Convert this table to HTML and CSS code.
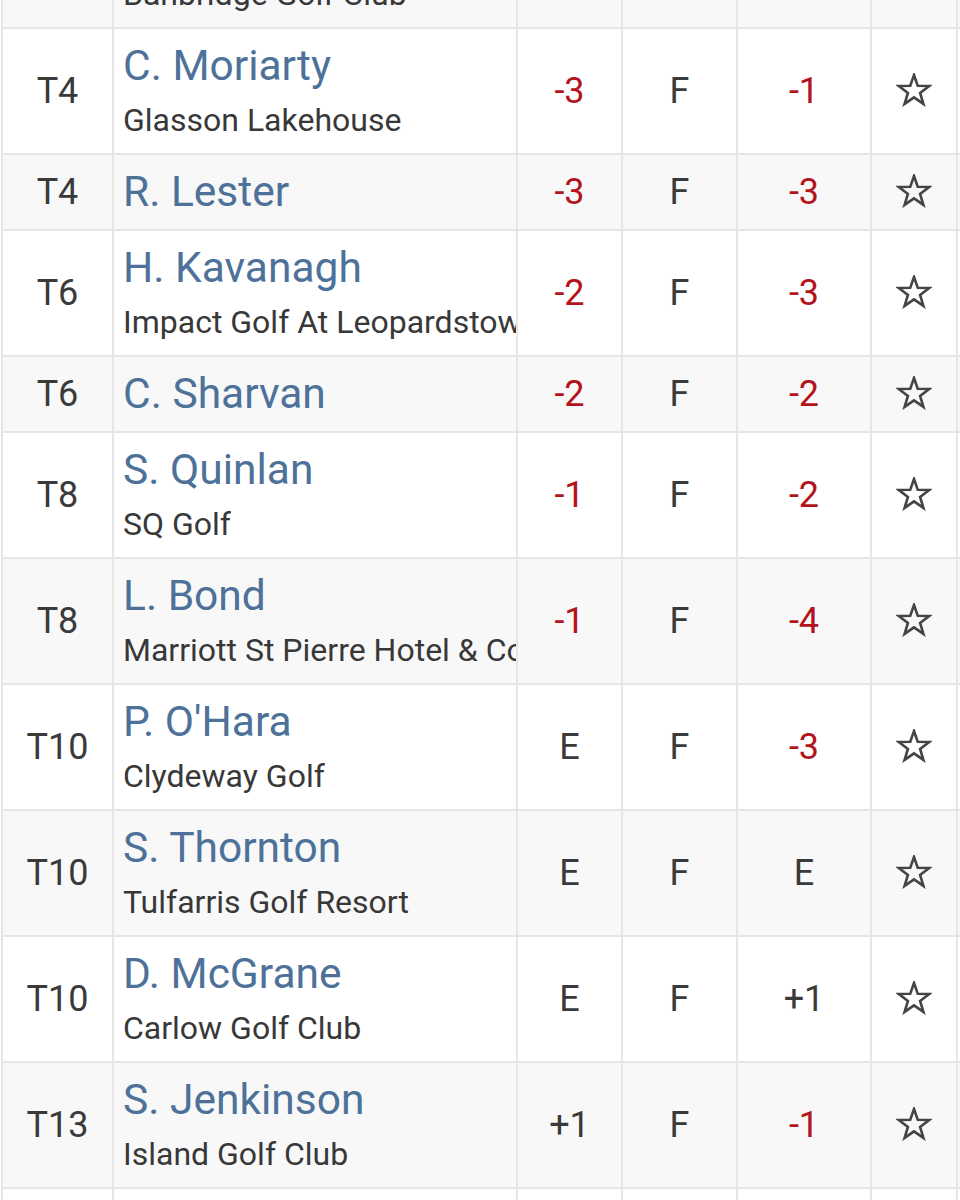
FILE: index.html
```html
<!DOCTYPE html>
<html lang="en">
<head>
<meta charset="utf-8">
<title>Leaderboard</title>
<link rel="stylesheet" href="styles.css">
</head>
<body>
<div class="board" role="table">
  <div class="row" role="row">
    <div class="cell pos">3</div>
    <div class="cell player"><a class="name">P. Doran</a><div class="club">Banbridge Golf Club</div></div>
    <div class="cell num under">-4</div>
    <div class="cell num">F</div>
    <div class="cell num under">-2</div>
    <div class="cell fav"><svg class="star" viewBox="0 0 36 34"><polygon points="18,2 21.76,12.82 33.22,13.06 24.09,19.98 27.4,30.94 18,24.4 8.6,30.94 11.91,19.98 2.78,13.06 14.24,12.82"/></svg></div>
  </div>
  <div class="row" role="row">
    <div class="cell pos">T4</div>
    <div class="cell player"><a class="name">C. Moriarty</a><div class="club">Glasson Lakehouse</div></div>
    <div class="cell num under">-3</div>
    <div class="cell num">F</div>
    <div class="cell num under">-1</div>
    <div class="cell fav"><svg class="star" viewBox="0 0 36 34"><polygon points="18,2 21.76,12.82 33.22,13.06 24.09,19.98 27.4,30.94 18,24.4 8.6,30.94 11.91,19.98 2.78,13.06 14.24,12.82"/></svg></div>
  </div>
  <div class="row" role="row">
    <div class="cell pos">T4</div>
    <div class="cell player"><a class="name">R. Lester</a></div>
    <div class="cell num under">-3</div>
    <div class="cell num">F</div>
    <div class="cell num under">-3</div>
    <div class="cell fav"><svg class="star" viewBox="0 0 36 34"><polygon points="18,2 21.76,12.82 33.22,13.06 24.09,19.98 27.4,30.94 18,24.4 8.6,30.94 11.91,19.98 2.78,13.06 14.24,12.82"/></svg></div>
  </div>
  <div class="row" role="row">
    <div class="cell pos">T6</div>
    <div class="cell player"><a class="name">H. Kavanagh</a><div class="club">Impact Golf At Leopardstown</div></div>
    <div class="cell num under">-2</div>
    <div class="cell num">F</div>
    <div class="cell num under">-3</div>
    <div class="cell fav"><svg class="star" viewBox="0 0 36 34"><polygon points="18,2 21.76,12.82 33.22,13.06 24.09,19.98 27.4,30.94 18,24.4 8.6,30.94 11.91,19.98 2.78,13.06 14.24,12.82"/></svg></div>
  </div>
  <div class="row" role="row">
    <div class="cell pos">T6</div>
    <div class="cell player"><a class="name">C. Sharvan</a></div>
    <div class="cell num under">-2</div>
    <div class="cell num">F</div>
    <div class="cell num under">-2</div>
    <div class="cell fav"><svg class="star" viewBox="0 0 36 34"><polygon points="18,2 21.76,12.82 33.22,13.06 24.09,19.98 27.4,30.94 18,24.4 8.6,30.94 11.91,19.98 2.78,13.06 14.24,12.82"/></svg></div>
  </div>
  <div class="row" role="row">
    <div class="cell pos">T8</div>
    <div class="cell player"><a class="name">S. Quinlan</a><div class="club">SQ Golf</div></div>
    <div class="cell num under">-1</div>
    <div class="cell num">F</div>
    <div class="cell num under">-2</div>
    <div class="cell fav"><svg class="star" viewBox="0 0 36 34"><polygon points="18,2 21.76,12.82 33.22,13.06 24.09,19.98 27.4,30.94 18,24.4 8.6,30.94 11.91,19.98 2.78,13.06 14.24,12.82"/></svg></div>
  </div>
  <div class="row" role="row">
    <div class="cell pos">T8</div>
    <div class="cell player"><a class="name">L. Bond</a><div class="club">Marriott St Pierre Hotel &amp; Country Club</div></div>
    <div class="cell num under">-1</div>
    <div class="cell num">F</div>
    <div class="cell num under">-4</div>
    <div class="cell fav"><svg class="star" viewBox="0 0 36 34"><polygon points="18,2 21.76,12.82 33.22,13.06 24.09,19.98 27.4,30.94 18,24.4 8.6,30.94 11.91,19.98 2.78,13.06 14.24,12.82"/></svg></div>
  </div>
  <div class="row" role="row">
    <div class="cell pos">T10</div>
    <div class="cell player"><a class="name">P. O'Hara</a><div class="club">Clydeway Golf</div></div>
    <div class="cell num">E</div>
    <div class="cell num">F</div>
    <div class="cell num under">-3</div>
    <div class="cell fav"><svg class="star" viewBox="0 0 36 34"><polygon points="18,2 21.76,12.82 33.22,13.06 24.09,19.98 27.4,30.94 18,24.4 8.6,30.94 11.91,19.98 2.78,13.06 14.24,12.82"/></svg></div>
  </div>
  <div class="row" role="row">
    <div class="cell pos">T10</div>
    <div class="cell player"><a class="name">S. Thornton</a><div class="club">Tulfarris Golf Resort</div></div>
    <div class="cell num">E</div>
    <div class="cell num">F</div>
    <div class="cell num">E</div>
    <div class="cell fav"><svg class="star" viewBox="0 0 36 34"><polygon points="18,2 21.76,12.82 33.22,13.06 24.09,19.98 27.4,30.94 18,24.4 8.6,30.94 11.91,19.98 2.78,13.06 14.24,12.82"/></svg></div>
  </div>
  <div class="row" role="row">
    <div class="cell pos">T10</div>
    <div class="cell player"><a class="name">D. McGrane</a><div class="club">Carlow Golf Club</div></div>
    <div class="cell num">E</div>
    <div class="cell num">F</div>
    <div class="cell num">+1</div>
    <div class="cell fav"><svg class="star" viewBox="0 0 36 34"><polygon points="18,2 21.76,12.82 33.22,13.06 24.09,19.98 27.4,30.94 18,24.4 8.6,30.94 11.91,19.98 2.78,13.06 14.24,12.82"/></svg></div>
  </div>
  <div class="row" role="row">
    <div class="cell pos">T13</div>
    <div class="cell player"><a class="name">S. Jenkinson</a><div class="club">Island Golf Club</div></div>
    <div class="cell num">+1</div>
    <div class="cell num">F</div>
    <div class="cell num under">-1</div>
    <div class="cell fav"><svg class="star" viewBox="0 0 36 34"><polygon points="18,2 21.76,12.82 33.22,13.06 24.09,19.98 27.4,30.94 18,24.4 8.6,30.94 11.91,19.98 2.78,13.06 14.24,12.82"/></svg></div>
  </div>
  <div class="row" role="row">
    <div class="cell pos">T13</div>
    <div class="cell player"><a class="name">M. Kelly</a><div class="club">Golf Club</div></div>
    <div class="cell num">+1</div>
    <div class="cell num">F</div>
    <div class="cell num">E</div>
    <div class="cell fav"><svg class="star" viewBox="0 0 36 34"><polygon points="18,2 21.76,12.82 33.22,13.06 24.09,19.98 27.4,30.94 18,24.4 8.6,30.94 11.91,19.98 2.78,13.06 14.24,12.82"/></svg></div>
  </div>
</div>
</body>
</html>
```

FILE: styles.css
```css
html, body {
  margin: 0;
  padding: 0;
  background: #ffffff;
}

body {
  font-family: Roboto, "Noto Sans", "Liberation Sans", sans-serif;
  color: #383838;
  overflow: hidden;
}

.board {
  margin: -97px 0 0 1px;
  width: 957px;
  border-left: 2px solid #e6e6e6;
}

.row {
  display: grid;
  grid-template-columns: 111px 404px 105px 115px 134px 86px;
  border-bottom: 2px solid #e6e6e6;
  background: #f8f8f8;
}

.row:nth-child(even) {
  background: #ffffff;
}

.cell {
  border-right: 2px solid #e6e6e6;
  display: flex;
  align-items: center;
  justify-content: center;
  min-width: 0;
}

.pos {
  font-size: 36px;
  color: #3a3a3a;
}

.player {
  flex-direction: column;
  align-items: flex-start;
  justify-content: flex-start;
  padding: 12px 0 12px 9px;
  overflow: hidden;
  white-space: nowrap;
}

.name {
  display: block;
  font-size: 42.5px;
  line-height: 50px;
  color: #4d7199;
  text-decoration: none;
}

.club {
  max-width: 100%;
  overflow: hidden;
  font-size: 32px;
  line-height: 36px;
  margin: 11px 0 3px;
  color: #383838;
}

.num {
  font-size: 36px;
  color: #3a3a3a;
}

.num.under {
  color: #b3141b;
}

.star {
  width: 36px;
  height: 34px;
  margin-bottom: 3px;
}

.star polygon {
  fill: none;
  stroke: #444444;
  stroke-width: 2.6;
  stroke-linejoin: miter;
}
```
